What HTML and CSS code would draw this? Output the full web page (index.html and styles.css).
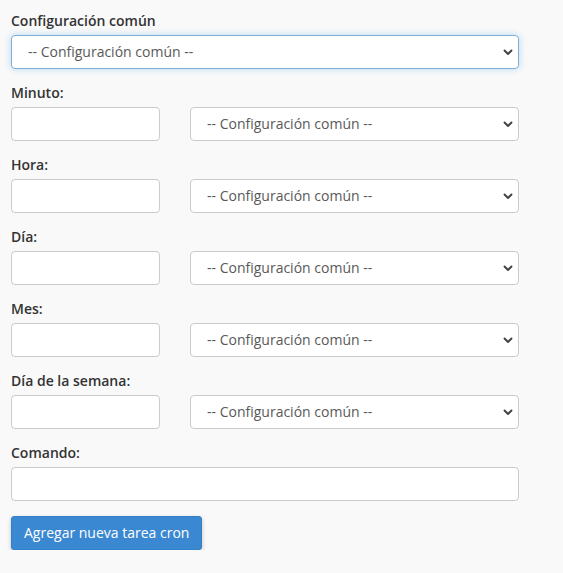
FILE: index.html
```html
<!DOCTYPE html>
<html lang="es">
<head>
<meta charset="utf-8">
<title>Cron</title>
<link rel="stylesheet" href="styles.css">
</head>
<body>
<form class="cron-form">
  <div class="group">
    <label class="lbl">Configuración común</label>
    <div class="select-wrap">
      <select class="ctl sel focused"><option>-- Configuración común --</option></select>
      <svg class="chev" viewBox="0 0 10 6" width="10" height="6"><path d="M1 1 L5 5 L9 1" fill="none" stroke="#444" stroke-width="2"/></svg>
    </div>
  </div>

  <div class="group">
    <label class="lbl">Minuto:</label>
    <div class="row">
      <input class="ctl" type="text">
      <div class="select-wrap">
        <select class="ctl sel"><option>-- Configuración común --</option></select>
        <svg class="chev" viewBox="0 0 10 6" width="10" height="6"><path d="M1 1 L5 5 L9 1" fill="none" stroke="#444" stroke-width="2"/></svg>
      </div>
    </div>
  </div>

  <div class="group">
    <label class="lbl">Hora:</label>
    <div class="row">
      <input class="ctl" type="text">
      <div class="select-wrap">
        <select class="ctl sel"><option>-- Configuración común --</option></select>
        <svg class="chev" viewBox="0 0 10 6" width="10" height="6"><path d="M1 1 L5 5 L9 1" fill="none" stroke="#444" stroke-width="2"/></svg>
      </div>
    </div>
  </div>

  <div class="group">
    <label class="lbl">Día:</label>
    <div class="row">
      <input class="ctl" type="text">
      <div class="select-wrap">
        <select class="ctl sel"><option>-- Configuración común --</option></select>
        <svg class="chev" viewBox="0 0 10 6" width="10" height="6"><path d="M1 1 L5 5 L9 1" fill="none" stroke="#444" stroke-width="2"/></svg>
      </div>
    </div>
  </div>

  <div class="group">
    <label class="lbl">Mes:</label>
    <div class="row">
      <input class="ctl" type="text">
      <div class="select-wrap">
        <select class="ctl sel"><option>-- Configuración común --</option></select>
        <svg class="chev" viewBox="0 0 10 6" width="10" height="6"><path d="M1 1 L5 5 L9 1" fill="none" stroke="#444" stroke-width="2"/></svg>
      </div>
    </div>
  </div>

  <div class="group">
    <label class="lbl">Día de la semana:</label>
    <div class="row">
      <input class="ctl" type="text">
      <div class="select-wrap">
        <select class="ctl sel"><option>-- Configuración común --</option></select>
        <svg class="chev" viewBox="0 0 10 6" width="10" height="6"><path d="M1 1 L5 5 L9 1" fill="none" stroke="#444" stroke-width="2"/></svg>
      </div>
    </div>
  </div>

  <div class="group last">
    <label class="lbl">Comando:</label>
    <input class="ctl" type="text">
  </div>

  <button class="btn" type="button">Agregar nueva tarea cron</button>
</form>
</body>
</html>
```

FILE: styles.css
```css
html, body {
  margin: 0;
  padding: 0;
  background: #f9f9f9;
}
body {
  font-family: "Open Sans", "Liberation Sans", sans-serif;
  font-size: 14px;
  line-height: 20px;
  color: #333;
}
.cron-form {
  width: 508px;
  padding: 11px 0 0 11px;
}
.group {
  display: flex;
  flex-direction: column;
  margin-bottom: 14px;
}
.group.last {
  margin-bottom: 15px;
}
.lbl {
  display: block;
  font-weight: 600;
  color: #333;
  margin-bottom: 4px;
  line-height: 20px;
}
.row {
  display: grid;
  grid-template-columns: 149px 1fr;
  column-gap: 30px;
}
.ctl {
  box-sizing: border-box;
  display: block;
  width: 100%;
  height: 34px;
  margin: 0;
  padding: 6px 12px;
  font-family: inherit;
  font-size: 14px;
  line-height: 20px;
  color: #595959;
  background: #fff;
  border: 1px solid #cbcbcb;
  border-radius: 4px;
  outline: none;
}
.select-wrap {
  position: relative;
}
.sel {
  -webkit-appearance: none;
  appearance: none;
  padding-left: 16px;
  padding-right: 30px;
}
.sel.focused {
  border-color: #80aed6;
  box-shadow: 0 0 7px rgba(102, 175, 233, 0.45);
}
.chev {
  position: absolute;
  right: 6px;
  top: 14px;
  pointer-events: none;
}
.btn {
  display: block;
  box-sizing: border-box;
  height: 34px;
  padding: 6px 12px;
  white-space: nowrap;
  font-family: inherit;
  font-size: 14px;
  line-height: 20px;
  color: #fff;
  background: #3a88d2;
  border: 1px solid #3480c8;
  border-radius: 3px;
  box-shadow: 0 2px 4px rgba(0, 0, 0, 0.22);
}
```
